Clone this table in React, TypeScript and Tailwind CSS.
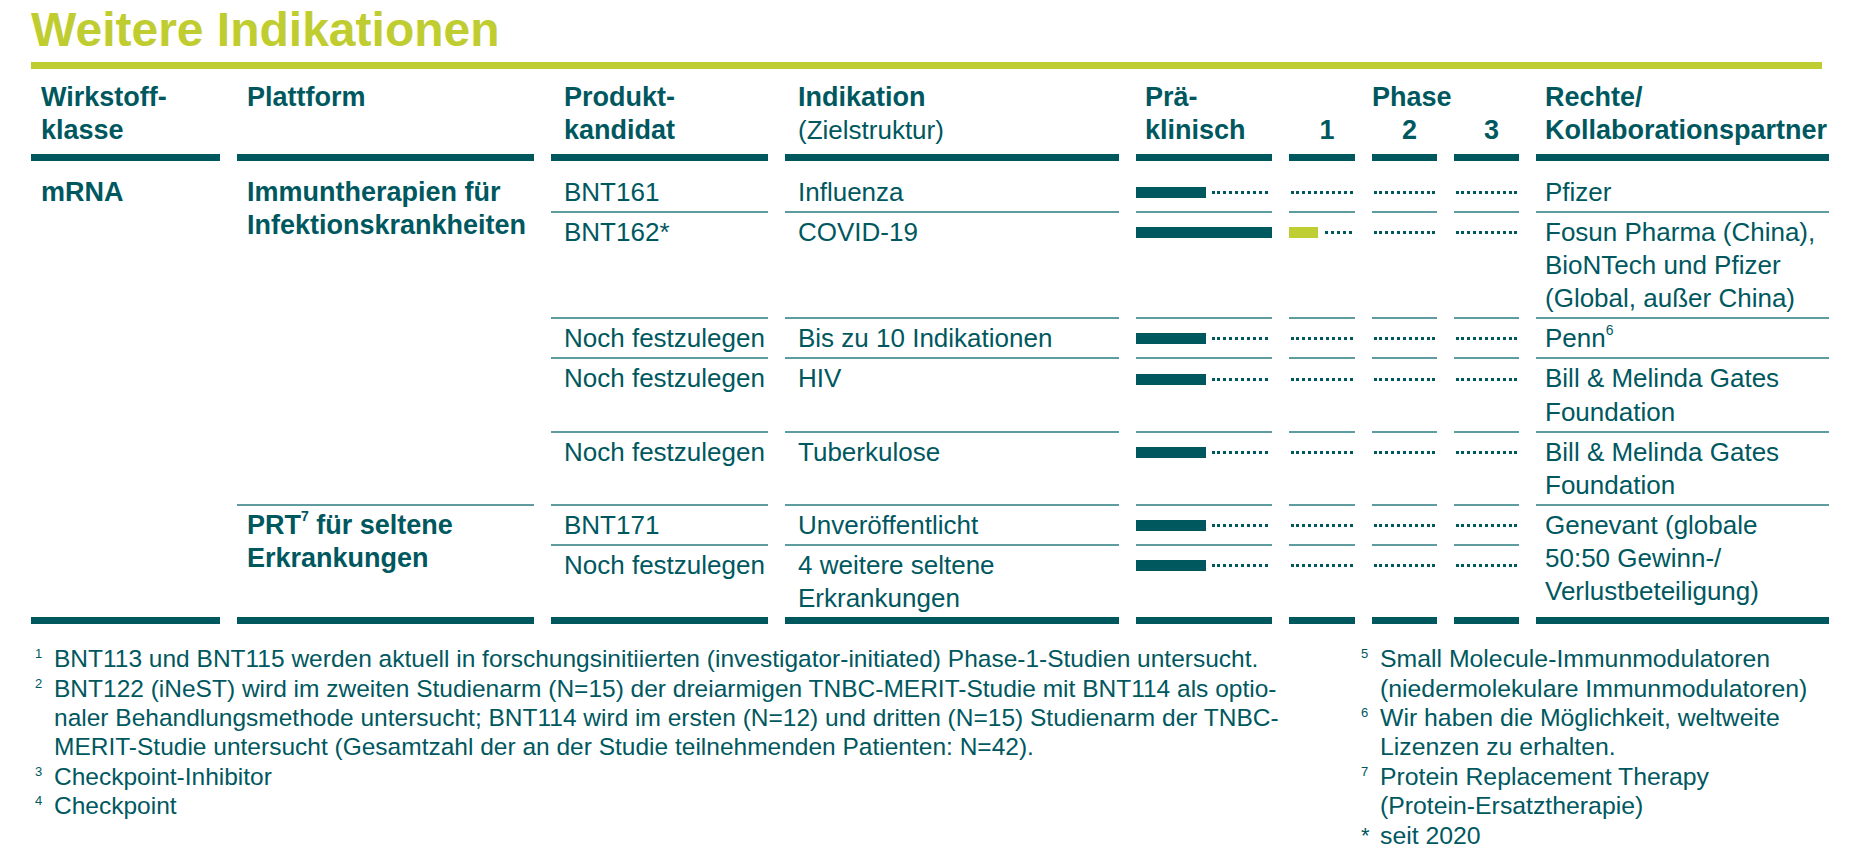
import React from 'react';

type Row = {
  prod: string;
  ind: string[];
  pre: 'short' | 'full';
  p1?: boolean;
};

const rows: Row[] = [
  { prod: 'BNT161', ind: ['Influenza'], pre: 'short' },
  { prod: 'BNT162*', ind: ['COVID-19'], pre: 'full', p1: true },
  { prod: 'Noch festzulegen', ind: ['Bis zu 10 Indikationen'], pre: 'short' },
  { prod: 'Noch festzulegen', ind: ['HIV'], pre: 'short' },
  { prod: 'Noch festzulegen', ind: ['Tuberkulose'], pre: 'short' },
  { prod: 'BNT171', ind: ['Unveröffentlicht'], pre: 'short' },
  { prod: 'Noch festzulegen', ind: ['4 weitere seltene', 'Erkrankungen'], pre: 'short' },
];

const rights: React.ReactNode[] = [
  <>Pfizer</>,
  <>
    Fosun Pharma (China),
    <br />
    BioNTech und Pfizer
    <br />
    (Global, außer China)
  </>,
  <>
    Penn<sup className="text-[14px] -top-[0.9em]">6</sup>
  </>,
  <>
    Bill &amp; Melinda Gates
    <br />
    Foundation
  </>,
  <>
    Bill &amp; Melinda Gates
    <br />
    Foundation
  </>,
];

const Cell = ({
  first,
  last,
  className = '',
  children,
}: {
  first?: boolean;
  last?: boolean;
  className?: string;
  children?: React.ReactNode;
}) => (
  <div
    className={`${first ? 'pt-[15px]' : 'pt-[3px]'} pb-[2px] ${
      last ? 'border-b-[7px] border-[#00585f]' : 'border-b-2 border-[#5f9ca0]'
    } ${className}`}
  >
    {children}
  </div>
);

const Dots = ({ className = '' }: { className?: string }) => (
  <div className={`h-0 flex-1 border-t-[3px] border-dotted border-[#00585f] ${className}`} />
);

const Phase = ({ children }: { children: React.ReactNode }) => (
  <div className="flex h-[33.1px] items-center">{children}</div>
);

function TableRow({ row, i }: { row: Row; i: number }) {
  const first = i === 0;
  const last = i === rows.length - 1;
  return (
    <>
      <Cell first={first} last={last} className="pl-[13px]">
        {row.prod}
      </Cell>
      <Cell first={first} last={last} className="pl-[13px]">
        {row.ind.map((l) => (
          <div key={l}>{l}</div>
        ))}
      </Cell>
      <Cell first={first} last={last}>
        <Phase>
          {row.pre === 'full' ? (
            <div className="h-[11px] w-full bg-[#00585f]" />
          ) : (
            <>
              <div className="h-[11px] w-[70px] bg-[#00585f]" />
              <Dots className="ml-[6px] mr-[4px]" />
            </>
          )}
        </Phase>
      </Cell>
      <Cell first={first} last={last}>
        <Phase>
          {row.p1 ? (
            <>
              <div className="h-[11px] w-[29px] bg-[#bfce32]" />
              <Dots className="ml-[7px] mr-[3px]" />
            </>
          ) : (
            <Dots className="mx-[2px]" />
          )}
        </Phase>
      </Cell>
      <Cell first={first} last={last}>
        <Phase>
          <Dots className="mx-[2px]" />
        </Phase>
      </Cell>
      <Cell first={first} last={last}>
        <Phase>
          <Dots className="mx-[2px]" />
        </Phase>
      </Cell>
      {i < 5 && (
        <Cell first={first} className="pl-[9px] whitespace-nowrap">
          {rights[i]}
        </Cell>
      )}
      {i === 5 && (
        <Cell last className="row-span-2 pl-[9px] whitespace-nowrap">
          Genevant (globale
          <br />
          50:50 Gewinn-/
          <br />
          Verlustbeteiligung)
        </Cell>
      )}
    </>
  );
}

const Note = ({ n, children, star }: { n: string; children: React.ReactNode; star?: boolean }) => (
  <div className="flex">
    <span
      className={`w-[19px] shrink-0 ${star ? 'text-[22px] leading-[29.4px]' : 'text-[13px] leading-[20px]'}`}
    >
      {n}
    </span>
    <div className="whitespace-nowrap">{children}</div>
  </div>
);

export default function App() {
  const grid =
    'grid grid-cols-[189px_297px_217px_334px_136px_66px_65px_65px_293px] gap-x-[17px]';
  return (
    <div className="min-h-screen bg-white px-[31px] pt-[6px] font-['Liberation_Sans',Arial,sans-serif] text-[#00585f]">
      <h1 className="text-[48px] font-bold leading-[48px] text-[#bfcd31]">Weitere Indikationen</h1>
      <div className="mt-[8px] h-[7px] bg-[#bfcd31]" />

      {/* Kopfzeile */}
      <div className={`${grid} text-[27px] font-bold leading-[33px]`}>
        <div className="border-b-[7px] border-[#00585f] pb-[7px] pl-[10px] pt-[12px]">
          <div>Wirkstoff-</div>
          <div>klasse</div>
        </div>
        <div className="border-b-[7px] border-[#00585f] pb-[7px] pl-[10px] pt-[12px]">
          <div>Plattform</div>
        </div>
        <div className="border-b-[7px] border-[#00585f] pb-[7px] pl-[13px] pt-[12px]">
          <div>Produkt-</div>
          <div>kandidat</div>
        </div>
        <div className="border-b-[7px] border-[#00585f] pb-[7px] pl-[13px] pt-[12px]">
          <div>Indikation</div>
          <div className="font-normal text-[26px]">(Zielstruktur)</div>
        </div>
        <div className="border-b-[7px] border-[#00585f] pb-[7px] pl-[9px] pt-[12px]">
          <div>Prä-</div>
          <div>klinisch</div>
        </div>
        <div className="border-b-[7px] border-[#00585f] pb-[7px] pl-[10px] pt-[12px] text-center">
          <div>&nbsp;</div>
          <div>1</div>
        </div>
        <div className="border-b-[7px] border-[#00585f] pb-[7px] pl-[10px] pt-[12px] text-center">
          <div className="-ml-[10px] whitespace-nowrap text-left">Phase</div>
          <div>2</div>
        </div>
        <div className="border-b-[7px] border-[#00585f] pb-[7px] pl-[10px] pt-[12px] text-center">
          <div>&nbsp;</div>
          <div>3</div>
        </div>
        <div className="border-b-[7px] border-[#00585f] pb-[7px] pl-[9px] pt-[12px] whitespace-nowrap">
          <div>Rechte/</div>
          <div>Kollaborationspartner</div>
        </div>
      </div>

      {/* Tabelle */}
      <div className={`${grid} text-[26px] leading-[33.1px]`}>
        <Cell first last className="row-span-7 pl-[10px] text-[27px] font-bold">
          mRNA
        </Cell>
        <Cell first className="row-span-5 pl-[10px] text-[27px] font-bold whitespace-nowrap">
          Immuntherapien für
          <br />
          Infektionskrankheiten
        </Cell>
        {rows.slice(0, 5).map((row, i) => (
          <TableRow key={i} row={row} i={i} />
        ))}
        <Cell last className="row-span-2 pl-[10px] text-[27px] font-bold whitespace-nowrap">
          PRT<sup className="text-[14px] -top-[0.9em]">7</sup> für seltene
          <br />
          Erkrankungen
        </Cell>
        <TableRow row={rows[5]} i={5} />
        <TableRow row={rows[6]} i={6} />
      </div>

      {/* Fußnoten */}
      <div className="mt-[20px] flex leading-[29.4px]">
        <div className="w-[1330px] shrink-0 pl-[4px] text-[24.5px]">
          <Note n="1">
            BNT113 und BNT115 werden aktuell in forschungsinitiierten (investigator-initiated) Phase-1-Studien
            untersucht.
          </Note>
          <Note n="2">
            BNT122 (iNeST) wird im zweiten Studienarm (N=15) der dreiarmigen TNBC-MERIT-Studie mit BNT114 als optio-
            <br />
            naler Behandlungsmethode untersucht; BNT114 wird im ersten (N=12) und dritten (N=15) Studienarm der TNBC-
            <br />
            MERIT-Studie untersucht (Gesamtzahl der an der Studie teilnehmenden Patienten: N=42).
          </Note>
          <Note n="3">Checkpoint-Inhibitor</Note>
          <Note n="4">Checkpoint</Note>
        </div>
        <div className="text-[24.8px]">
          <Note n="5">
            Small Molecule-Immunmodulatoren
            <br />
            (niedermolekulare Immunmodulatoren)
          </Note>
          <Note n="6">
            Wir haben die Möglichkeit, weltweite
            <br />
            Lizenzen zu erhalten.
          </Note>
          <Note n="7">
            Protein Replacement Therapy
            <br />
            (Protein-Ersatztherapie)
          </Note>
          <Note n="*" star>
            seit 2020
          </Note>
        </div>
      </div>
    </div>
  );
}
